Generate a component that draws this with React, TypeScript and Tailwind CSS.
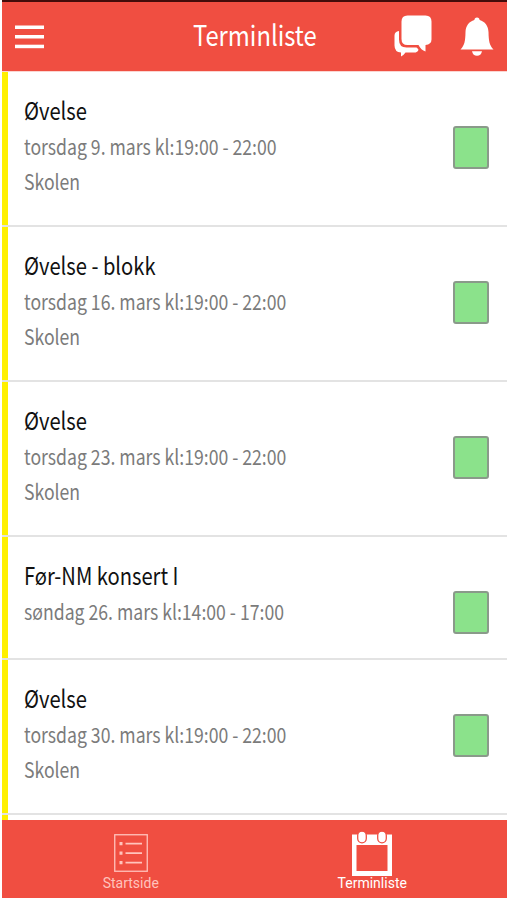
interface Termin {
  title: string;
  date: string;
  place?: string;
}

const TERMINER: Termin[] = [
  { title: "Øvelse", date: "torsdag 9. mars kl:19:00 - 22:00", place: "Skolen" },
  { title: "Øvelse - blokk", date: "torsdag 16. mars kl:19:00 - 22:00", place: "Skolen" },
  { title: "Øvelse", date: "torsdag 23. mars kl:19:00 - 22:00", place: "Skolen" },
  { title: "Før-NM konsert I", date: "søndag 26. mars kl:14:00 - 17:00" },
  { title: "Øvelse", date: "torsdag 30. mars kl:19:00 - 22:00", place: "Skolen" },
];

function MenuIcon() {
  return (
    <svg className="h-6 w-[29px]" viewBox="0 0 29 24" fill="white">
      <rect y="0.5" width="29" height="3.5" />
      <rect y="10" width="29" height="3.5" />
      <rect y="19.7" width="29" height="3.5" />
    </svg>
  );
}

function ChatIcon() {
  return (
    <svg className="h-[42px] w-[38px]" viewBox="0 0 38 42" fill="white">
      <path d="M13.5 0.5H31.5Q37.5 0.5 37.5 6.5V24.5Q37.5 29.3 31.5 30V36.5Q27 35 24.5 30H13.5Q7.5 30 7.5 24V6.5Q7.5 0.5 13.5 0.5Z" />
      <path d="M5 16V24.5Q5 32.5 12.5 32.5H22.5Q23.8 33.5 24.5 34.8Q23.8 37.6 20 37.6H11.5Q10 40 7 41.5V37.6Q0.5 37 0.5 30.5V20.5Q0.5 16.5 5 16Z" />
    </svg>
  );
}

function BellIcon() {
  return (
    <svg className="h-[39px] w-[34px]" viewBox="0 0 34 39" fill="white">
      <path d="M17 0.5C18.7 0.5 19.5 1.5 19.6 3C25 4.5 28.3 9 28.5 15C28.7 24 29.5 28.5 33.5 32.5H0.5C4.5 28.5 5.3 24 5.5 15C5.7 9 9 4.5 14.4 3C14.5 1.5 15.3 0.5 17 0.5Z" />
      <path d="M12 34.3H22Q21 38.8 17 38.8Q13 38.8 12 34.3Z" />
    </svg>
  );
}

function ListIcon() {
  return (
    <svg className="h-[38px] w-[34px]" viewBox="0 0 34 38" fill="none" stroke="currentColor">
      <rect x="0.75" y="0.75" width="32.5" height="36.5" strokeWidth="1.3" />
      <path d="M11.5 9.7H28M11.5 19.2H28M11.5 28.7H28" strokeWidth="1.7" />
      <path d="M5.5 9.7H8.5M5.5 19.2H8.5M5.5 28.7H8.5" strokeWidth="3.2" />
    </svg>
  );
}

function CalendarIcon() {
  return (
    <svg className="h-[45px] w-10" viewBox="0 0 40 45">
      <path fill="white" fillRule="evenodd" d="M0 3.5H40V45H0ZM4.500 14V40H35.500V14Z" />
      <rect x="5.7" y="0.2" width="8.6" height="11.6" rx="4.3" fill="white" stroke="#f04e41" strokeWidth="1.3" />
      <rect x="25.7" y="0.2" width="8.6" height="11.6" rx="4.3" fill="white" stroke="#f04e41" strokeWidth="1.3" />
    </svg>
  );
}

function TerminRow({ termin }: { termin: Termin }) {
  return (
    <div>
      <div
        className={`flex border-l-[6px] border-[#fff000] pt-5 pl-4 ${termin.place ? "pb-[26px]" : "pb-6"}`}
      >
        <div className="min-w-0 flex-1 text-[21px] leading-[35px] whitespace-nowrap text-[#7b7b7b]">
          <h2 className="mb-[2px] origin-left scale-x-[0.84] text-2xl leading-[35px] text-[#111]">
            {termin.title}
          </h2>
          <p className="origin-left scale-x-[0.84]">{termin.date}</p>
          {termin.place && <p className="origin-left scale-x-[0.84]">{termin.place}</p>}
        </div>
        <div className="mt-[34px] mr-[18px] h-[43px] w-9 shrink-0 rounded-[3px] border-2 border-[#8a9a8a] bg-[#8be28b]" />
      </div>
      <div className="h-[2px] bg-[#e3e3e3]" />
    </div>
  );
}

export default function App() {
  return (
    <div className="flex h-[900px] w-[507px] flex-col overflow-hidden bg-white pl-[2px] font-['Noto_Sans_CJK_JP',sans-serif]">
      <header className="grid h-[71px] shrink-0 grid-cols-[1fr_auto_1fr] items-center border-t-2 border-[#430c0a] bg-[#f04e41] pr-[13px] pl-[13px] text-white">
        <MenuIcon />
        <h1 className="scale-x-[0.85] pb-[6px] text-center text-[28px] leading-none">Terminliste</h1>
        <div className="flex items-center justify-end gap-[28px]">
          <div className="pb-[2px]">
            <ChatIcon />
          </div>
          <BellIcon />
        </div>
      </header>

      <main className="min-h-0 flex-1 overflow-hidden border-t border-[#fbd5d1]">
        {TERMINER.map((termin) => (
          <TerminRow key={termin.date} termin={termin} />
        ))}
        <div className="h-2 border-l-[6px] border-[#fff000]" />
      </main>

      <nav className="mb-[2px] grid h-[78px] shrink-0 grid-cols-2 bg-[#f04e41] pr-[14px] pl-[8px] font-[Roboto,sans-serif] text-sm leading-4">
        <div className="flex flex-col items-center pt-[14px] text-[#ffc3bc]">
          <ListIcon />
          <span className="mt-[3px]">Startside</span>
        </div>
        <div className="flex flex-col items-center pt-[11px] text-white">
          <CalendarIcon />
          <span className="-mt-px">Terminliste</span>
        </div>
      </nav>
    </div>
  );
}
